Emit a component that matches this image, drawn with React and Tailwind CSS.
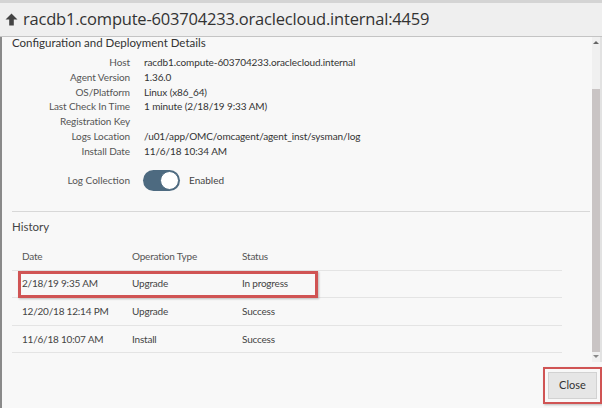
const details = [
  ["Host", "racdb1.compute-603704233.oraclecloud.internal"],
  ["Agent Version", "1.36.0"],
  ["OS/Platform", "Linux (x86_64)"],
  ["Last Check In Time", "1 minute (2/18/19 9:33 AM)"],
  ["Registration Key", ""],
  ["Logs Location", "/u01/app/OMC/omcagent/agent_inst/sysman/log"],
  ["Install Date", "11/6/18 10:34 AM"],
];

const history = [
  { date: "2/18/19 9:35 AM", op: "Upgrade", status: "In progress", flagged: true },
  { date: "12/20/18 12:14 PM", op: "Upgrade", status: "Success" },
  { date: "11/6/18 10:07 AM", op: "Install", status: "Success" },
];

export default function App() {
  return (
    <div
      className="flex h-[408px] w-[602px] flex-col overflow-hidden bg-[#f8f8f8] text-[#333]"
      style={{ fontFamily: 'Lato, "Open Sans", sans-serif' }}
    >
      {/* top strip + title bar */}
      <div className="h-[3px] bg-[#d4d4d4]" />
      <div className="flex h-[34px] items-center gap-[5px] border-b border-[#c4c4c4] bg-[#efefef] pl-[5px]">
        <svg width="13" height="13" viewBox="0 0 13 13" className="text-[#444]">
          <path d="M6.5 0.5 L12.5 6.5 L8.8 6.5 L8.8 12.5 L4.2 12.5 L4.2 6.5 L0.5 6.5 Z" fill="currentColor" />
        </svg>
        <span className="font-['Open_Sans'] text-[16.5px] tracking-[-0.2px] text-[#333]">
          racdb1.compute-603704233.oraclecloud.internal:4459
        </span>
      </div>

      {/* scrolling body */}
      <div className="flex h-[325px] border-l-2 border-[#8a8a8a]">
        <div className="flex-1 overflow-hidden pl-[10px] pr-[2px]">
          <div className="text-[11.5px] leading-[11px] text-[#333]">
            Configuration and Deployment Details
          </div>

          <div className="mt-[7px] flex flex-col text-[10px] leading-[14.8px] tracking-[-0.1px]">
            {details.map(([label, value]) => (
              <div key={label} className="flex h-[14.8px]">
                <div className="w-[118px] shrink-0 text-right text-[#555]">{label}</div>
                <div className="pl-[14px] text-[#333]">{value}</div>
              </div>
            ))}
          </div>

          <div className="mt-[11px] flex items-center text-[10px]">
            <div className="w-[118px] shrink-0 text-right text-[#555]">Log Collection</div>
            <div className="ml-[13px] flex h-[21px] w-[37px] items-center justify-end rounded-full bg-[#4d6a80] p-[1px]">
              <div className="h-[19px] w-[19px] rounded-full border border-[#4d6a80] bg-white" />
            </div>
            <div className="ml-[9px] text-[#444]">Enabled</div>
          </div>

          <div className="mt-[20px] border-t border-[#d8d8d8]" />

          <div className="mt-[7px] text-[11.5px] leading-[16px] text-[#444]">History</div>

          <div className="mt-[8px] w-[550px] text-[10px] tracking-[-0.2px]">
            <div className="flex h-[28px] items-center border-b border-[#e4e4e4] text-[#555]">
              <div className="w-[110px] pl-[10px]">Date</div>
              <div className="w-[110px] pl-[10px]">Operation Type</div>
              <div className="pl-[10px]">Status</div>
            </div>
            {history.map((row) => (
              <div
                key={row.date}
                className="relative flex h-[27.6px] items-center border-b border-[#e4e4e4] text-[#444]"
              >
                <div className="w-[110px] pl-[10px]">{row.date}</div>
                <div className="w-[110px] pl-[10px]">{row.op}</div>
                <div className="pl-[10px]">{row.status}</div>
                {row.flagged && (
                  <div className="absolute left-[6px] top-0 h-[27px] w-[300px] border-[3px] border-[#d05454] shadow-[1px_1px_2px_rgba(0,0,0,0.25)]" />
                )}
              </div>
            ))}
          </div>
        </div>

        {/* scrollbar */}
        <div className="flex w-[10px] flex-col items-center border-r-2 border-[#e2e2e2] bg-[#f0f0f0]">
          <div className="mt-[4px] h-0 w-0 border-x-[3px] border-b-[3px] border-x-transparent border-b-[#666]" />
          <div className="mt-[45px] h-[263px] w-[8px] bg-[#c9c4c4]" />
          <div className="mt-[3px] h-0 w-0 border-x-[3px] border-t-[3px] border-x-transparent border-t-[#888]" />
        </div>
      </div>

      {/* footer */}
      <div className="flex flex-1 items-start justify-end border-l-2 border-[#8a8a8a] pt-[5px]">
        <div className="border-[2px] border-[#d05454] p-[3px] shadow-[1px_1px_2px_rgba(0,0,0,0.25)]">
          <button className="flex h-[27px] w-[49px] items-center justify-center border border-[#d2d2d2] bg-[#e6e6e6] text-[11px] text-[#333]">
            Close
          </button>
        </div>
      </div>
    </div>
  );
}
